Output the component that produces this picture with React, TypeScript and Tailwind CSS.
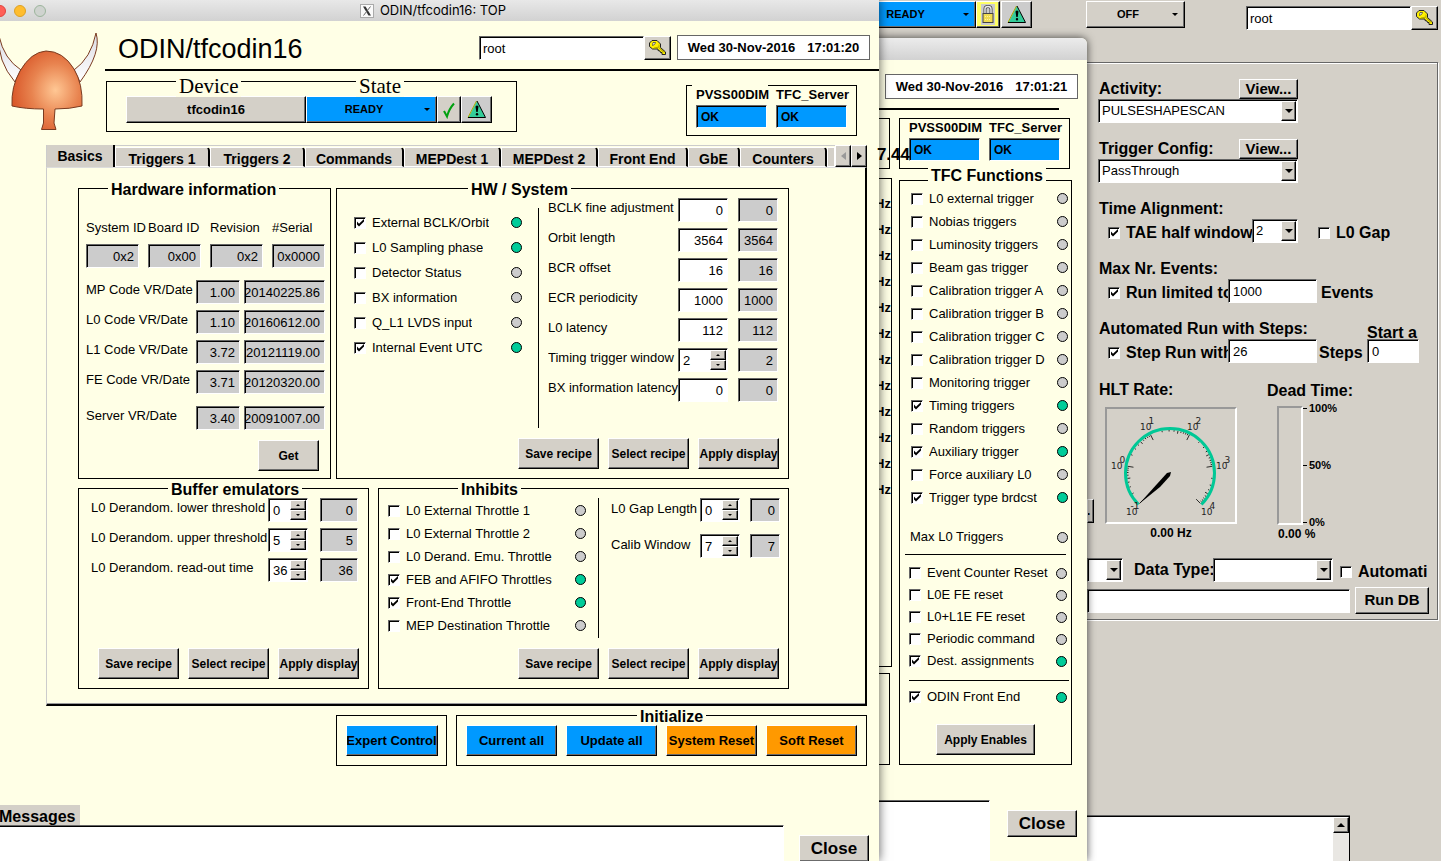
import React, { useId } from "react";
import clsx from "clsx";

const RAISED =
  "border border-t-white border-l-white border-r-black border-b-black shadow-[inset_-1px_-1px_0_#6b6b6b]";
const SUNKEN =
  "border border-t-[#666] border-l-[#666] border-r-white border-b-white shadow-[inset_1px_1px_0_#000]";

type ButtonProps = {
  children: React.ReactNode;
  className?: string;
  label?: string;
};

function RaisedButton({ children, className, label }: ButtonProps) {
  return (
    <button
      type="button"
      aria-label={label}
      className={clsx(
        "flex shrink-0 items-center justify-center overflow-hidden font-bold whitespace-nowrap",
        RAISED,
        className,
      )}
    >
      {children}
    </button>
  );
}

function RecipeButtons() {
  return (
    <div className="flex justify-end gap-[9px] pr-[9px] pb-[9px]">
      {["Save recipe", "Select recipe", "Apply display"].map((t) => (
        <RaisedButton key={t} className="h-[31px] w-[81px] bg-[#d4d0c8] text-[12px]">
          {t}
        </RaisedButton>
      ))}
    </div>
  );
}

function Arrow({ className = "border-t-4" }: { className?: string }) {
  return <span className={clsx("block border-x-4 border-x-transparent border-t-black", className)} />;
}

function StateButton({ text, className }: { text: string; className: string }) {
  return (
    <RaisedButton className={clsx("text-[11px]", className)}>
      <span className="flex-1 pr-[3px] text-center">{text}</span>
      <span className="mr-[6px] block border-x-[3px] border-t-[3px] border-x-transparent border-t-black" />
    </RaisedButton>
  );
}

function Readout({ value, className }: { value: string; className: string }) {
  return (
    <output
      className={clsx(
        "flex h-6 shrink-0 items-center justify-end overflow-hidden bg-[#ccc] pt-px pr-1 text-[13px]",
        SUNKEN,
        className,
      )}
    >
      {value}
    </output>
  );
}

function CheckBox({ checked, id }: { checked?: boolean; id: string }) {
  return (
    <span className="grid shrink-0">
      <input
        id={id}
        type="checkbox"
        defaultChecked={checked}
        className={clsx("peer size-3 appearance-none bg-white [grid-area:1/1]", SUNKEN)}
      />
      <svg
        viewBox="0 0 12 12"
        className="pointer-events-none hidden size-3 [grid-area:1/1] peer-checked:block"
        aria-hidden="true"
      >
        <path d="M3 4.5V7.5L5 9.5L10 4.5V2L5 6.8Z" fill="#000" />
      </svg>
    </span>
  );
}

function Led({ on }: { on?: boolean }) {
  return (
    <span
      className={clsx(
        "size-[11px] shrink-0 rounded-full border border-black",
        on ? "bg-[#00cc99]" : "bg-[#ccc]",
      )}
    />
  );
}

type Item = { label: string; checked?: boolean; on?: boolean };

function CheckRow({ item, className, clip }: { item: Item; className: string; clip?: string }) {
  const id = useId();
  return (
    <div className={clsx("flex items-center text-[13px]", className)}>
      <CheckBox id={id} checked={item.checked} />
      <label htmlFor={id} className={clsx("ml-[6px] overflow-hidden whitespace-nowrap", clip)}>
        {item.label}
      </label>
      <span className="ml-auto flex">
        <Led on={item.on} />
      </span>
    </div>
  );
}

function Spinner({ value, id, width }: { value: string; id: string; width: string }) {
  return (
    <div className={clsx("flex h-6 shrink-0 bg-white p-px text-[13px]", SUNKEN, width)}>
      <input id={id} defaultValue={value} className="min-w-0 flex-1 bg-transparent pt-px pl-[3px] outline-none" />
      <div className="flex w-4 shrink-0 flex-col">
        <RaisedButton label="Increase" className="h-[10px] w-4 bg-[#d4d0c8]">
          <span className="block border-x-2 border-b-2 border-x-transparent border-b-black" />
        </RaisedButton>
        <RaisedButton label="Decrease" className="h-[10px] w-4 bg-[#d4d0c8]">
          <span className="block border-x-2 border-t-2 border-x-transparent border-t-black" />
        </RaisedButton>
      </div>
    </div>
  );
}

function NumberInput({ value, id, className }: { value: string; id?: string; className: string }) {
  return (
    <input
      id={id}
      defaultValue={value}
      className={clsx("h-6 shrink-0 bg-white pt-px text-[13px] outline-none", SUNKEN, className)}
    />
  );
}

function Combo({ value, label, className }: { value: string; label: string; className: string }) {
  return (
    <div className={clsx("relative h-6 shrink-0 bg-white text-[13px]", SUNKEN, className)}>
      <select aria-label={label} className="h-full w-full appearance-none bg-transparent pr-4 pl-[3px] outline-none">
        <option>{value}</option>
      </select>
      <span
        className={clsx(
          "pointer-events-none absolute inset-y-px right-px flex w-[15px] items-center justify-center bg-[#d4d0c8]",
          RAISED,
        )}
      >
        <Arrow />
      </span>
    </div>
  );
}

function Group({
  title,
  legend,
  className,
  children,
}: {
  title: string;
  legend: string;
  className: string;
  children: React.ReactNode;
}) {
  return (
    <fieldset className={clsx("min-w-0 shrink-0 border border-black", className)}>
      <legend className={clsx("h-[18px] px-[3px] text-[16px] leading-[22px] font-bold whitespace-nowrap", legend)}>
        {title}
      </legend>
      {children}
    </fieldset>
  );
}

function KeyIcon() {
  return (
    <svg width="18" height="16" viewBox="0 0 18 16" className="shrink-0" aria-hidden="true">
      <path
        d="M3 .5H8L11.500 4V7.500L16.500 12V14.500H13V12.500H11.500L11 11L9 10.500V9L3.500 9L.5 6.500V3Z"
        fill="#fff000"
        stroke="#222"
      />
      <path d="M4 2.500H6.500L5.500 4.500L3.500 5.500Z" fill="#fff" stroke="#333" strokeWidth=".7" />
      <path d="M10 7.500L15 12.500" stroke="#8a8000" />
      <path d="M10 4.500V7L5 8" stroke="#b5a800" fill="none" />
    </svg>
  );
}

function WarnIcon() {
  return (
    <svg width="20" height="19" viewBox="0 0 20 19" className="shrink-0" aria-hidden="true">
      <path d="M10 1L18.500 17.500H1.500Z" fill="#33cc99" />
      <path d="M1 17.500L9.500 1" stroke="#a8a800" fill="none" />
      <path d="M10 1L18.500 17.500H1" stroke="#000" fill="none" />
      <path d="M8.500 6.500Q10 4.500 11.500 6.500L10.700 12H9.300Z" fill="#000" />
      <circle cx="10" cy="14.300" r="1.200" fill="#000" />
    </svg>
  );
}

function LockIcon() {
  return (
    <svg width="12" height="19" viewBox="1 1 12 19" className="shrink-0" aria-hidden="true">
      <path d="M4 10V5Q4 2.500 7 2.500T10 5V10" fill="none" stroke="#444" strokeWidth="3" />
      <path d="M4 10V5Q4 2.500 7 2.500T10 5V10" fill="none" stroke="#eee" strokeWidth="1.400" />
      <rect x="2" y="9.500" width="10" height="9" fill="#f0dc50" stroke="#444" />
      <path d="M4 12.500H10M4 15.500H10" stroke="#fff3a0" strokeDasharray="1 1" />
    </svg>
  );
}

function Helmet() {
  return (
    <svg width="104" height="104" viewBox="-4 30 104 104" aria-hidden="true">
      <defs>
        <radialGradient id="copper" cx="0.62" cy="0.5" r="0.62">
          <stop offset="0" stopColor="#ffc794" />
          <stop offset="0.55" stopColor="#e8834f" />
          <stop offset="1" stopColor="#d9582a" />
        </radialGradient>
        <linearGradient id="horn" x1="0" y1="0" x2="0" y2="1">
          <stop offset="0" stopColor="#dcdce4" />
          <stop offset="1" stopColor="#fff" />
        </linearGradient>
      </defs>
      <path d="M-1 36Q4 59 21 70L15 82Q-3 61 -1 36Z" fill="url(#horn)" stroke="#7a3b20" />
      <path d="M96 33Q91 58 74 70L80 82Q102 52 96 33Z" fill="url(#horn)" stroke="#7a3b20" />
      <path
        d="M12 106Q11 87 20 71Q31 52 46 51Q63 51 74 69Q83 84 82 106Q70 109 55 109L54 123L56 129.500H41.500L43.500 123V109Q25 109 12 106Z"
        fill="url(#copper)"
        stroke="#7a3b20"
      />
    </svg>
  );
}

function DateBox({ time }: { time: string }) {
  return (
    <div className="flex h-[25px] w-[193px] shrink-0 items-center justify-center gap-3 border border-[#666] bg-white text-[13px] font-bold whitespace-nowrap">
      <span>Wed 30-Nov-2016</span>
      <span>{time}</span>
    </div>
  );
}

function ServerStatus({ gap }: { gap?: boolean }) {
  return (
    <div className="relative flex h-[51px] w-[171px] shrink-0 gap-[9px] border border-black pt-px pl-[9px] text-[13px] font-bold">
      {gap && <span className="absolute -top-px left-[5px] h-px w-[76px] bg-[#ffffe6]" />}
      {["PVSS00DIM", "TFC_Server"].map((name) => (
        <div key={name} className="w-[71px]">
          <div className="h-[18px] leading-[15px] whitespace-nowrap">{name}</div>
          <output className={clsx("flex h-[23px] items-center bg-[#0099ff] pl-1 text-[12px]", SUNKEN)}>OK</output>
        </div>
      ))}
    </div>
  );
}

const systemChecks: Item[] = [
  { label: "External BCLK/Orbit", checked: true, on: true },
  { label: "L0 Sampling phase", on: true },
  { label: "Detector Status" },
  { label: "BX information" },
  { label: "Q_L1 LVDS input" },
  { label: "Internal Event UTC", checked: true, on: true },
];

const systemValues = [
  ["BCLK fine adjustment", "0"],
  ["Orbit length", "3564"],
  ["BCR offset", "16"],
  ["ECR periodicity", "1000"],
  ["L0 latency", "112"],
  ["Timing trigger window", "2"],
  ["BX information latency", "0"],
];

const inhibits: Item[] = [
  { label: "L0 External Throttle 1" },
  { label: "L0 External Throttle 2" },
  { label: "L0 Derand. Emu. Throttle" },
  { label: "FEB and AFIFO Throttles", checked: true, on: true },
  { label: "Front-End Throttle", checked: true, on: true },
  { label: "MEP Destination Throttle" },
];

const triggerItems: Item[] = [
  { label: "L0 external trigger" },
  { label: "Nobias triggers" },
  { label: "Luminosity triggers" },
  { label: "Beam gas trigger" },
  { label: "Calibration trigger A" },
  { label: "Calibration trigger B" },
  { label: "Calibration trigger C" },
  { label: "Calibration trigger D" },
  { label: "Monitoring trigger" },
  { label: "Timing triggers", checked: true, on: true },
  { label: "Random triggers" },
  { label: "Auxiliary trigger", checked: true, on: true },
  { label: "Force auxiliary L0" },
  { label: "Trigger type brdcst", checked: true, on: true },
];

const resetItems: Item[] = [
  { label: "Event Counter Reset" },
  { label: "L0E FE reset" },
  { label: "L0+L1E FE reset" },
  { label: "Periodic command" },
  { label: "Dest. assignments", checked: true, on: true },
];

const versions = [
  ["MP Code VR/Date", "1.00", "20140225.86"],
  ["L0 Code VR/Date", "1.10", "20160612.00"],
  ["L1 Code VR/Date", "3.72", "20121119.00"],
  ["FE Code VR/Date", "3.71", "20120320.00"],
];

const tabs = [
  ["Triggers 1", "w-[95px]"],
  ["Triggers 2", "w-[95px]"],
  ["Commands", "w-[99px]"],
  ["MEPDest 1", "w-[97px]"],
  ["MEPDest 2", "w-[97px]"],
  ["Front End", "w-[90px]"],
  ["GbE", "w-[52px]"],
  ["Counters", "w-[87px]"],
];

function VersionRow({ row }: { row: string[] }) {
  return (
    <div className="flex">
      <span className="w-[110px] shrink-0 overflow-hidden leading-5 whitespace-nowrap">{row[0]}</span>
      <Readout value={row[1]} className="w-11" />
      <Readout value={row[2]} className="ml-1 w-[81px]" />
    </div>
  );
}

function HardwareInfo() {
  return (
    <Group title="Hardware information" legend="ml-[29px]" className="h-[300px] w-[253px]">
      <div className="flex flex-col pl-[7px] text-[13px]">
        <div className="mt-[21px] flex gap-[9px] leading-5 whitespace-nowrap">
          {["System ID", "Board ID", "Revision", "#Serial"].map((t) => (
            <span key={t} className="w-[53px]">
              {t}
            </span>
          ))}
        </div>
        <div className="mt-[6px] flex gap-[9px]">
          {["0x2", "0x00", "0x2", "0x0000"].map((v, i) => (
            <Readout key={i} value={v} className="w-[53px]" />
          ))}
        </div>
        <div className="mt-3 flex flex-col gap-[6px]">
          {versions.map((row) => (
            <VersionRow key={row[0]} row={row} />
          ))}
        </div>
        <div className="mt-3">
          <VersionRow row={["Server VR/Date", "3.40", "20091007.00"]} />
        </div>
        <RaisedButton className="mt-[10px] ml-[172px] h-[31px] w-[61px] bg-[#d4d0c8] text-[12px]">Get</RaisedButton>
      </div>
    </Group>
  );
}

function HwSystem() {
  return (
    <Group title="HW / System" legend="ml-[131px]" className="h-[300px] w-[453px]">
      <div className="flex h-[241px] pt-px">
        <div className="ml-[17px] w-[168px] pt-3">
          {systemChecks.map((item) => (
            <CheckRow key={item.label} item={item} className="h-[25px]" />
          ))}
        </div>
        <div className="mt-[10px] ml-4 h-[220px] w-px bg-black" />
        <div className="ml-[9px] flex flex-col gap-[6px] text-[13px]">
          {systemValues.map(([label, value], i) => (
            <div key={label} className="flex">
              <label
                htmlFor={`sys-${i}`}
                className="w-[130px] shrink-0 overflow-hidden leading-5 whitespace-nowrap"
              >
                {label}
              </label>
              {i === 5 ? (
                <Spinner id={`sys-${i}`} value={value} width="w-[50px]" />
              ) : (
                <NumberInput id={`sys-${i}`} value={value} className="w-[50px] pr-1 text-right" />
              )}
              <Readout value={value} className="ml-[10px] w-10" />
            </div>
          ))}
        </div>
      </div>
      <RecipeButtons />
    </Group>
  );
}

function BufferEmulators() {
  return (
    <Group title="Buffer emulators" legend="ml-[89px]" className="h-[210px] w-[291px]">
      <div className="flex h-[151px] flex-col gap-[6px] pt-px pl-3 text-[13px]">
        {[
          ["L0 Derandom. lower threshold", "0"],
          ["L0 Derandom. upper threshold", "5"],
          ["L0 Derandom. read-out time", "36"],
        ].map(([label, value], i) => (
          <div key={label} className="flex">
            <label htmlFor={`buf-${i}`} className="w-[177px] shrink-0 overflow-hidden leading-5 whitespace-nowrap">
              {label}
            </label>
            <Spinner id={`buf-${i}`} value={value} width="w-10" />
            <Readout value={value} className="ml-3 w-[38px]" />
          </div>
        ))}
      </div>
      <RecipeButtons />
    </Group>
  );
}

function Inhibits() {
  return (
    <Group title="Inhibits" legend="ml-[79px]" className="h-[210px] w-[411px]">
      <div className="flex h-[151px] pt-px">
        <div className="ml-[9px] w-[198px] pt-px">
          {inhibits.map((item) => (
            <CheckRow key={item.label} item={item} className="h-[23px]" />
          ))}
        </div>
        <div className="ml-3 h-[140px] w-px bg-black" />
        <div className="ml-3 flex flex-col gap-3 text-[13px]">
          {[
            ["L0 Gap Length", "0"],
            ["Calib Window", "7"],
          ].map(([label, value], i) => (
            <div key={label} className="flex">
              <label
                htmlFor={`inh-${i}`}
                className="w-[89px] shrink-0 overflow-hidden leading-[22px] whitespace-nowrap"
              >
                {label}
              </label>
              <Spinner id={`inh-${i}`} value={value} width="w-10" />
              <Readout value={value} className="ml-[10px] w-[30px]" />
            </div>
          ))}
        </div>
      </div>
      <RecipeButtons />
    </Group>
  );
}

function TopWindow() {
  return (
    <section className="absolute inset-y-0 -left-[13px] flex w-[892px] flex-col bg-[#ffffe6] shadow-[0_0_10px_rgba(0,0,0,0.65)]">
      <div className="flex h-[21px] shrink-0 items-center bg-linear-to-b from-[#e8e8e8] to-[#d2d2d2] pl-[7px]">
        <div className="flex gap-2">
          <span className="size-3 rounded-full border border-[#e0443e] bg-[#ff5f57]" />
          <span className="size-3 rounded-full border border-[#dea123] bg-[#ffbd2e]" />
          <span className="size-3 rounded-full border border-[#9cb59c] bg-[#cfd3cf]" />
        </div>
        <div className="flex flex-1 items-center justify-center gap-[6px] pr-[59px] font-['Inter',sans-serif] text-[13px]">
          <svg width="14" height="14" viewBox="0 0 14 14" aria-hidden="true">
            <rect x=".5" y=".5" width="13" height="13" fill="#fafafa" stroke="#aaa" />
            <path d="M3 2.500H5.500L11 11.500H8.500Z" fill="#333" />
            <path d="M10.500 2.500L3.500 11.500" stroke="#666" />
          </svg>
          ODIN/tfcodin16: TOP
        </div>
      </div>

      <header className="flex h-[124px] shrink-0">
        <div className="w-[118px] shrink-0 pt-[9px] pl-[9px]">
          <Helmet />
        </div>
        <div className="flex-1">
          <div className="flex h-12 items-start">
            <h1 className="mt-[10px] flex-1 pl-[13px] text-[27px] leading-9">ODIN/tfcodin16</h1>
            <div className="mt-[15px] mr-[6px] flex">
              <NumberInput value="root" className="w-[165px] px-[3px]" />
              <RaisedButton label="Log in" className="h-6 w-[27px] bg-[#d4d0c8]">
                <KeyIcon />
              </RaisedButton>
            </div>
            <div className="mt-[14px] mr-[9px]">
              <DateBox time="17:01:20" />
            </div>
          </div>
          <div className="h-[2px] bg-black" />
          <div className="flex justify-between pr-[22px] pl-px">
            <div className="relative mt-[10px] flex h-[51px] w-[411px] border border-black pt-[14px] pl-[19px]">
              <span className="absolute -top-[7px] left-[69px] bg-[#ffffe6] px-[3px] font-['Liberation_Serif',serif] text-[21px] leading-[22px]">
                Device
              </span>
              <span className="absolute -top-[7px] left-[249px] bg-[#ffffe6] px-[3px] font-['Liberation_Serif',serif] text-[21px] leading-[22px]">
                State
              </span>
              <RaisedButton className="h-[27px] w-[180px] bg-[#d4d0c8] text-[13px]">tfcodin16</RaisedButton>
              <StateButton text="READY" className="h-[27px] w-[131px] bg-[#0099ff]" />
              <RaisedButton label="Confirm" className="h-[27px] w-6 bg-[#d4d0c8]">
                <svg width="14" height="18" viewBox="0 0 14 18" aria-hidden="true">
                  <path d="M2 10L5 15.500Q7 8 12 2.500" fill="none" stroke="#00a010" strokeWidth="2" />
                </svg>
              </RaisedButton>
              <RaisedButton label="Warnings" className="h-[27px] w-[31px] bg-[#ccc]">
                <WarnIcon />
              </RaisedButton>
            </div>
            <div className="mt-[14px]">
              <ServerStatus gap />
            </div>
          </div>
        </div>
      </header>

      <div className="ml-[59px] w-[821px] shrink-0">
        <div role="tablist" className="flex h-[22px] items-end border-t border-[#ccc] text-[14px]">
          <button
            type="button"
            role="tab"
            aria-selected="true"
            className="h-[22px] w-[69px] border-r-2 border-l border-l-[#ccc] border-r-black bg-[#d4d0c8] font-bold"
          >
            Basics
          </button>
          {tabs.map(([t, w]) => (
            <button
              key={t}
              type="button"
              role="tab"
              className={clsx(
                "h-5 rounded-tr-sm border border-r-2 border-t-white border-r-black border-b-white border-l-white bg-[#d4d0c8] pt-px font-bold whitespace-nowrap",
                w,
              )}
            >
              {t}
            </button>
          ))}
          <span className="h-5 flex-1 border border-white bg-[#d4d0c8]" />
          <RaisedButton label="Previous tabs" className="h-[22px] w-4 bg-[#d4d0c8]">
            <span className="border-y-4 border-r-[5px] border-y-transparent border-r-[#999]" />
          </RaisedButton>
          <RaisedButton label="Next tabs" className="h-[22px] w-4 bg-[#d4d0c8]">
            <span className="border-y-4 border-l-[5px] border-y-transparent border-l-black" />
          </RaisedButton>
        </div>
        <div
          role="tabpanel"
          className="flex flex-col border-t border-r-2 border-b-2 border-l border-t-[#ddd] border-r-black border-b-black border-l-[#ccc] pt-[11px] pb-[15px] pl-[31px] shadow-[inset_0_-1px_0_#999]"
        >
          <div className="flex gap-[5px]">
            <HardwareInfo />
            <HwSystem />
          </div>
          <div className="flex gap-[9px]">
            <BufferEmulators />
            <Inhibits />
          </div>
        </div>
      </div>

      <div className="flex shrink-0 gap-[9px] pl-[349px]">
        <div className="mt-[9px] flex h-[51px] w-[111px] items-start justify-center border border-black pt-[9px]">
          <RaisedButton className="h-[31px] w-[92px] bg-[#0099ff] text-[13px]">Expert Control</RaisedButton>
        </div>
        <Group title="Initialize" legend="ml-[180px]" className="h-[60px] w-[411px]">
          <div className="flex gap-[9px] pt-px pl-[9px]">
            {["Current all", "Update all", "System Reset", "Soft Reset"].map((t, i) => (
              <RaisedButton
                key={t}
                className={clsx("h-[31px] w-[91px] text-[13px]", i < 2 ? "bg-[#0099ff]" : "bg-[#ff9900]")}
              >
                {t}
              </RaisedButton>
            ))}
          </div>
        </Group>
      </div>

      <div className="mt-[39px] flex min-h-0 flex-1 pl-3">
        <div className="flex flex-1 flex-col">
          <label htmlFor="messages" className="h-5 self-start bg-[#d4d0c8] pr-1 text-[16px] leading-6 font-bold">
            Messages
          </label>
          <textarea
            id="messages"
            className="min-h-0 flex-1 resize-none border-t border-r border-t-[#666] border-r-white bg-white shadow-[inset_0_1px_0_#000] outline-none"
          />
        </div>
        <RaisedButton className="mt-[30px] mr-[10px] ml-[15px] h-[27px] w-[70px] bg-[#d4d0c8] text-[17px]">
          Close
        </RaisedButton>
      </div>
    </section>
  );
}

function FunctionsWindow() {
  return (
    <section className="absolute top-[38px] bottom-0 left-[600px] flex w-[487px] flex-col rounded-t-md bg-[#ffffe6] shadow-[0_0_8px_rgba(0,0,0,0.7)]">
      <div className="h-[22px] shrink-0 rounded-t-md bg-linear-to-b from-[#ececec] to-[#d2d2d2]" />
      <div className="mt-[14px] flex shrink-0 justify-end pr-[9px]">
        <DateBox time="17:01:21" />
      </div>
      <div className="mt-[9px] mr-[28px] h-[2px] shrink-0 bg-black" />
      <div className="mt-2 flex shrink-0">
        <div className="flex w-[292px] flex-col">
          <div className="mr-[2px] flex h-[51px] items-end justify-end border border-black pb-[1px]">
            <span className="relative z-10 -mr-[21px] text-[17px] leading-6 font-bold">7.44</span>
          </div>
          <div className="mt-[9px] h-[489px] border border-black pt-3 text-right text-[13px] leading-[26px] font-bold">
            {Array.from({ length: 12 }, (_, i) => (
              <div key={i}>Hz</div>
            ))}
          </div>
          <div className="mt-[6px] mr-[2px] h-[92px] border border-black" />
        </div>
        <div className="ml-[7px] w-[173px]">
          <ServerStatus />
          <div className="relative mt-[11px] flex flex-col border border-black pt-[6px] pb-[9px]">
            <h2 className="absolute -top-[15px] left-7 bg-[#ffffe6] px-[3px] text-[16px] leading-5 font-bold whitespace-nowrap">
              TFC Functions
            </h2>
            {triggerItems.map((item) => (
              <CheckRow key={item.label} item={item} className="h-[23px] pr-[3px] pl-[11px]" clip="w-[119px]" />
            ))}
            <div className="mt-[17px] flex h-[22px] items-center justify-between pr-[3px] pl-[10px] text-[13px]">
              Max L0 Triggers
              <Led />
            </div>
            <div className="mx-[5px] mt-[6px] mb-[7px] h-px bg-black" />
            {resetItems.map((item) => (
              <CheckRow key={item.label} item={item} className="h-[22px] pr-1 pl-[9px]" clip="w-[122px]" />
            ))}
            <div className="mt-2 mr-[2px] mb-[5px] ml-[9px] h-px bg-black" />
            <CheckRow item={{ label: "ODIN Front End", checked: true, on: true }} className="h-[22px] pr-1 pl-[9px]" />
            <RaisedButton className="mt-4 h-[31px] w-[99px] self-center bg-[#d4d0c8] text-[12px]">
              Apply Enables
            </RaisedButton>
          </div>
        </div>
      </div>
      <div className="mt-[35px] flex min-h-0 flex-1">
        <textarea
          aria-label="Log"
          className="flex-1 resize-none border-t border-r border-t-[#666] border-r-white bg-white shadow-[inset_0_1px_0_#000] outline-none"
        />
        <RaisedButton className="mt-[10px] mr-[10px] ml-[17px] h-[27px] w-[70px] bg-[#d4d0c8] text-[17px]">
          Close
        </RaisedButton>
      </div>
    </section>
  );
}

const CX = 65;
const CY = 66;

function polar(radius: number, decade: number) {
  const a = ((225 - decade * 54) * Math.PI) / 180;
  return [CX + radius * Math.cos(a), CY - radius * Math.sin(a)];
}

function RateGauge() {
  const ticks: { d: number; len: number }[] = [];
  for (let i = 0; i <= 5; i++) {
    ticks.push({ d: i, len: 6 });
    if (i < 5) for (let k = 2; k < 10; k++) ticks.push({ d: i + Math.log10(k), len: k === 5 ? 3 : 1.5 });
  }
  const [sx, sy] = polar(44.5, 0);
  const [ex, ey] = polar(44.5, 5);
  const labels: [number, number, string][] = [
    [21, 108, "-1"],
    [6, 62, "0"],
    [35, 23, "1"],
    [82, 23, "2"],
    [111, 62, "3"],
    [96, 108, "4"],
  ];
  return (
    <svg
      viewBox="2 2 128 113"
      className="h-[117px] w-[132px] border-2 border-t-[#999] border-r-white border-b-white border-l-[#999]"
      role="img"
      aria-label="HLT rate gauge"
    >
      {ticks.map(({ d, len }, i) => {
        const [x1, y1] = polar(43, d);
        const [x2, y2] = polar(43 - len, d);
        return <line key={i} x1={x1} y1={y1} x2={x2} y2={y2} stroke="#000" strokeWidth=".8" />;
      })}
      <path d={`M${sx} ${sy}A44.5 44.5 0 1 1 ${ex} ${ey}`} fill="none" stroke="#00c896" strokeWidth="3" />
      <path d="M66 65L62 66L52 77L34 97L55 80L65 69Z" fill="#000" />
      {labels.map(([x, y, sup]) => (
        <text
          key={sup}
          x={x}
          y={y}
          fill="#222"
          className="font-['DejaVu_Sans',sans-serif] text-[9px] font-normal"
        >
          10
          <tspan dx={sup === "-1" ? -7 : -3} dy={-6}>
            {sup}
          </tspan>
        </text>
      ))}
    </svg>
  );
}

function CheckLabel({ text, checked, className }: { text: string; checked?: boolean; className?: string }) {
  const id = useId();
  return (
    <div className={clsx("flex shrink-0 items-center gap-[6px] overflow-hidden pt-[3px]", className)}>
      <CheckBox id={id} checked={checked} />
      <label htmlFor={id} className="whitespace-nowrap">
        {text}
      </label>
    </div>
  );
}

function RunControl() {
  return (
    <main className="flex h-full flex-col">
      <div className="flex h-[62px] shrink-0 items-start pt-px pr-[3px] pl-[850px]">
        <StateButton text="READY" className="h-[27px] w-[126px] bg-[#0099ff]" />
        <RaisedButton label="Lock" className="h-[27px] w-6 bg-[#ffff66]">
          <span className="flex h-[21px] w-[14px] shrink-0 items-center justify-center bg-[#ccc]">
            <LockIcon />
          </span>
        </RaisedButton>
        <RaisedButton label="Warnings" className="ml-px h-[27px] w-[31px] bg-[#ccc]">
          <WarnIcon />
        </RaisedButton>
        <StateButton text="OFF" className="ml-[54px] h-[27px] w-[99px] bg-[#d4d0c8]" />
        <div className="mt-[5px] ml-auto flex">
          <NumberInput value="root" className="w-[165px] px-[3px]" />
          <RaisedButton label="Log in" className="h-6 w-[27px] bg-[#d4d0c8]">
            <KeyIcon />
          </RaisedButton>
        </div>
      </div>

      <div className="mr-[3px] flex h-[558px] shrink-0 flex-col border-t border-r border-b border-[#666] pt-4 pl-[1087px] text-[16px] font-bold shadow-[1px_1px_0_#fff,inset_0_1px_0_#fff]">
        <div className="flex flex-col gap-4 pl-[11px]">
          {[
            ["Activity:", "PULSESHAPESCAN"],
            ["Trigger Config:", "PassThrough"],
          ].map(([label, value]) => (
            <div key={label} className="w-[200px]">
              <div className="flex h-5 items-center justify-between">
                <span className="pl-px leading-[18px]">{label}</span>
                <RaisedButton className="h-5 w-[59px] bg-[#d4d0c8] text-[15px]">View...</RaisedButton>
              </div>
              <Combo value={value} label={label} className="font-normal" />
            </div>
          ))}
          <div>
            <div className="h-5 pl-px leading-5">Time Alignment:</div>
            <div className="flex h-6 items-center pl-[10px]">
              <CheckLabel text="TAE half window" checked className="w-[144px]" />
              <Combo value="2" label="TAE half window" className="w-[46px] font-normal" />
              <CheckLabel text="L0 Gap" className="ml-5" />
            </div>
          </div>
          <div>
            <div className="h-5 pl-px leading-5">Max Nr. Events:</div>
            <div className="flex h-6 items-center pl-[10px]">
              <CheckLabel text="Run limited to" checked className="w-[120px]" />
              <NumberInput value="1000" className="w-[89px] px-1 font-normal" />
              <span className="ml-1 pt-[3px]">Events</span>
            </div>
          </div>
          <div className="flex">
            <div className="w-[269px]">
              <div className="h-5 pl-px leading-5">Automated Run with Steps:</div>
              <div className="flex h-6 items-center pl-[10px]">
                <CheckLabel text="Step Run with" checked className="w-[120px]" />
                <NumberInput value="26" className="w-[89px] px-1 font-normal" />
                <span className="ml-[2px] pt-[3px]">Steps</span>
              </div>
            </div>
            <div className="w-[52px] whitespace-nowrap">
              <label htmlFor="start" className="block h-5 leading-7">
                Start a
              </label>
              <NumberInput id="start" value="0" className="w-[52px] px-1 font-normal" />
            </div>
          </div>
        </div>

        <div className="mt-[17px] flex h-[164px] shrink-0">
          <div className="w-3 self-end pb-[21px]">
            <RaisedButton label="More" className="h-6 w-[7px] bg-[#d4d0c8] pr-1 text-[13px]">
              .
            </RaisedButton>
          </div>
          <div className="w-[168px]">
            <div className="h-5 leading-5">HLT Rate:</div>
            <div className="mt-[7px] ml-[6px] w-[132px]">
              <RateGauge />
              <div className="text-center text-[12px] leading-[18px]">0.00 Hz</div>
            </div>
          </div>
          <div>
            <div className="h-5 leading-[22px]">Dead Time:</div>
            <div className="mt-[6px] ml-[10px] flex">
              <div className="h-[119px] w-[26px] border-2 border-t-[#999] border-r-white border-b-white border-l-[#999]" />
              <div className="-mt-1 flex h-[126px] flex-col justify-between text-[11px] leading-[12px]">
                {["100%", "50%", "0%"].map((t) => (
                  <span key={t} className="flex items-center gap-[2px]">
                    <span className="h-px w-1 bg-black" />
                    {t}
                  </span>
                ))}
              </div>
            </div>
            <div className="-mt-[3px] ml-[11px] text-[12px] leading-[18px]">0.00 %</div>
          </div>
        </div>

        <div className="mt-[14px] flex h-6 shrink-0 items-center">
          <Combo value="" label="Partition" className="w-[36px]" />
          <span className="ml-[11px] w-[79px] overflow-hidden whitespace-nowrap">Data Type:</span>
          <Combo value="" label="Data Type" className="w-[120px]" />
          <CheckLabel text="Automati" className="ml-[7px]" />
        </div>
        <div className="mt-[5px] flex h-[27px] shrink-0 items-center pr-2">
          <input aria-label="Comment" className={clsx("h-6 min-w-0 flex-1 bg-white outline-none", SUNKEN)} />
          <RaisedButton className="ml-[5px] h-[27px] w-[74px] bg-[#d4d0c8] text-[15px]">Run DB</RaisedButton>
        </div>
      </div>

      <div className="mt-[195px] mr-[91px] flex min-h-0 flex-1 border-t border-t-[#666] bg-white shadow-[inset_0_1px_0_#000]">
        <textarea aria-label="Messages" className="flex-1 resize-none outline-none" />
        <div className="mt-px w-[17px] border-r border-black bg-[#e9e7e3]">
          <RaisedButton label="Scroll up" className="size-4 bg-[#d4d0c8]">
            <span className="border-x-4 border-b-4 border-x-transparent border-b-black" />
          </RaisedButton>
        </div>
      </div>
    </main>
  );
}

export default function App() {
  return (
    <div className="relative h-screen w-full overflow-hidden bg-[#d4d0c8] font-['Liberation_Sans',Arial,sans-serif] text-black">
      <RunControl />
      <FunctionsWindow />
      <TopWindow />
    </div>
  );
}
